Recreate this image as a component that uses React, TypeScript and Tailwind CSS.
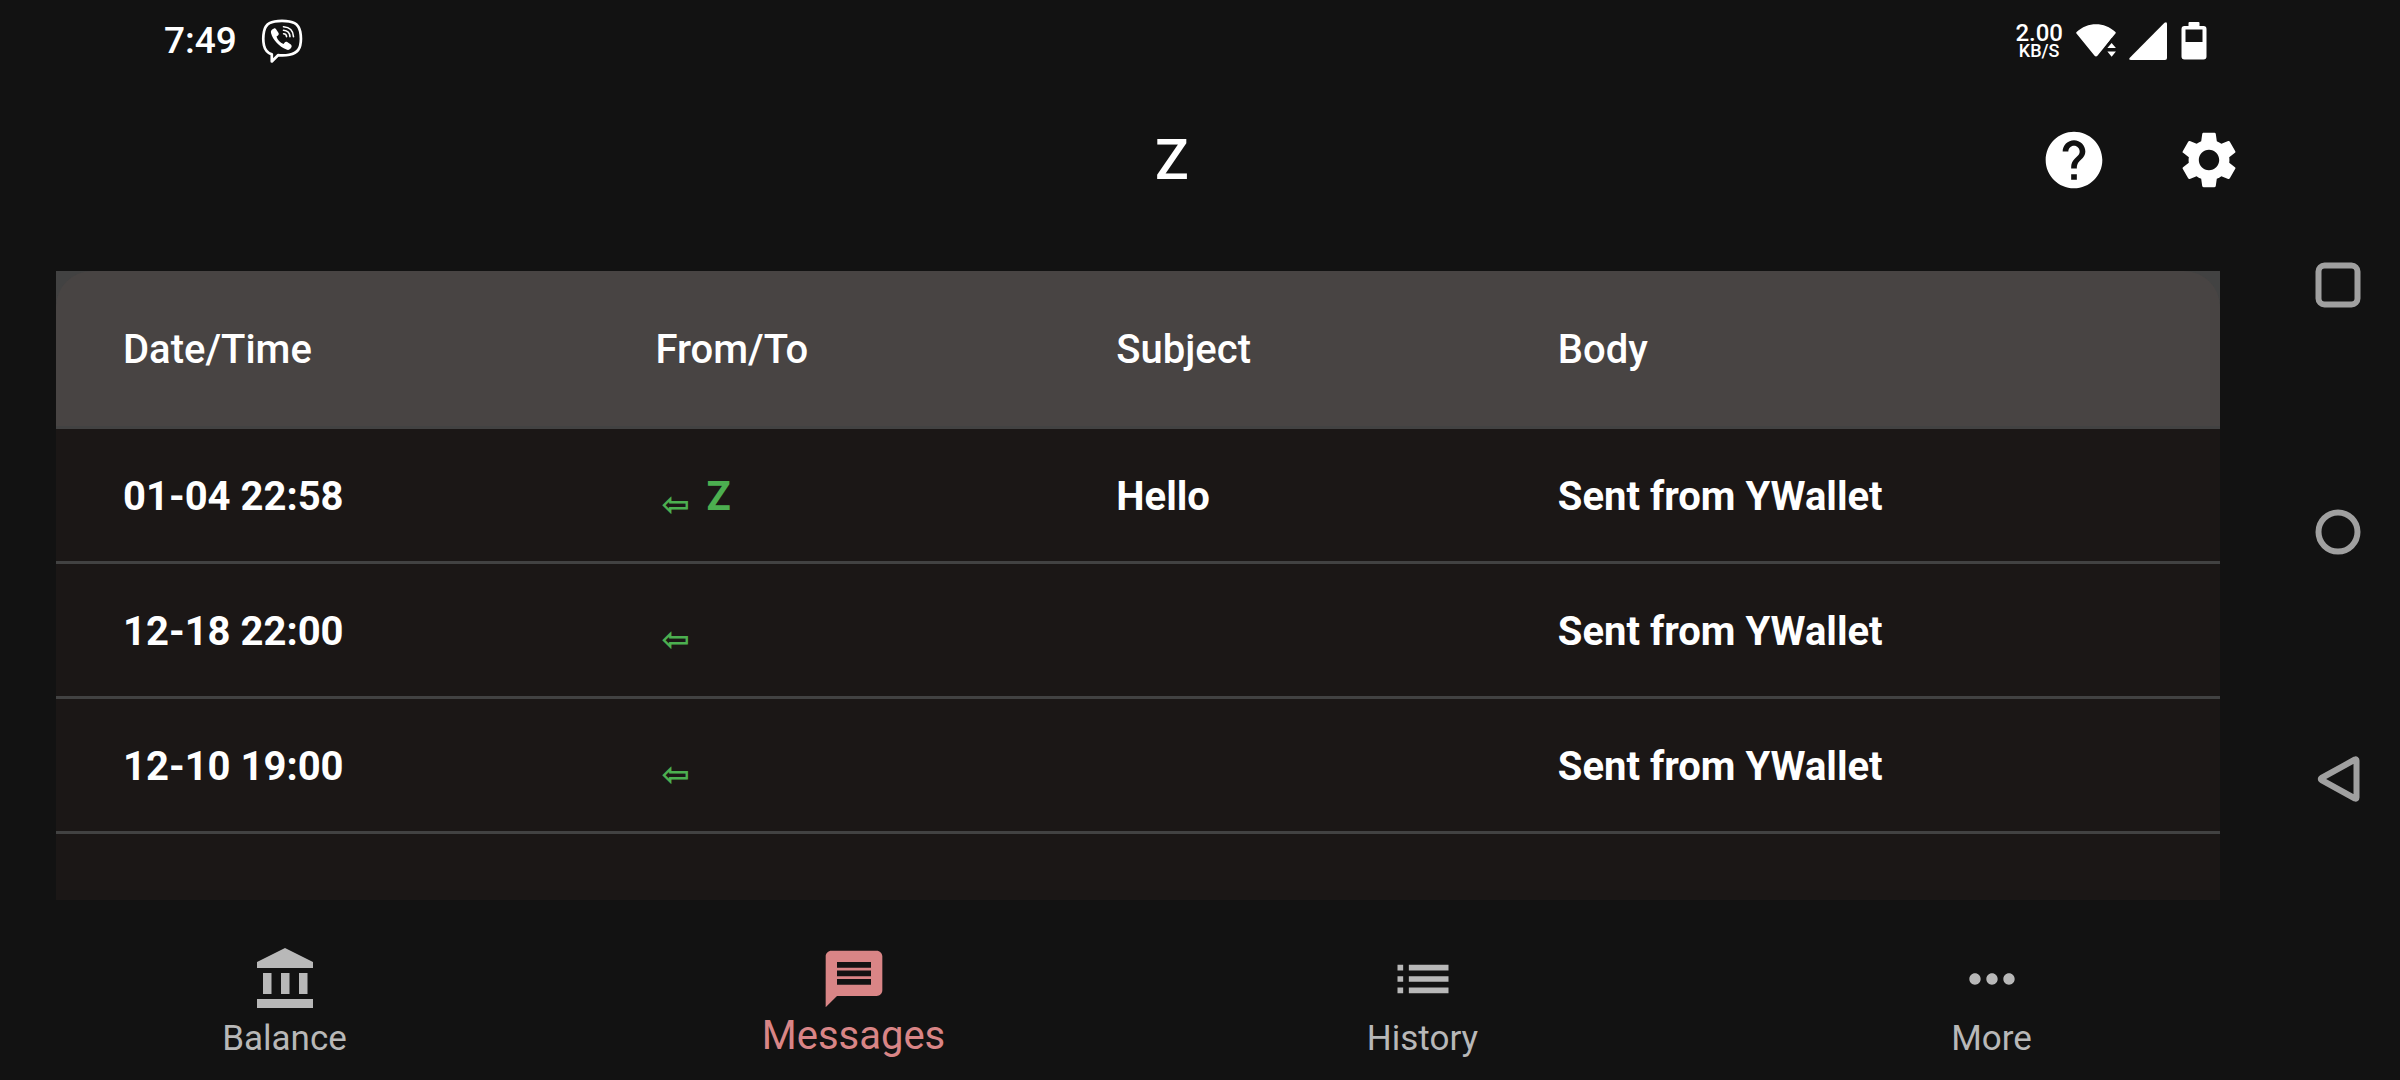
import type { ReactNode } from "react";
import { MdHelp, MdList, MdMessage, MdMoreHoriz, MdSettings } from "react-icons/md";

type Message = { date: string; contact: string; subject: string; body: string };

const messages: Message[] = [
  { date: "01-04 22:58", contact: "Z", subject: "Hello", body: "Sent from YWallet" },
  { date: "12-18 22:00", contact: "", subject: "", body: "Sent from YWallet" },
  { date: "12-10 19:00", contact: "", subject: "", body: "Sent from YWallet" },
];

function ViberIcon() {
  return (
    <svg viewBox="0 0 42 44" className="h-11 w-[42px]" fill="none" stroke="#fff" strokeLinecap="round" aria-label="Viber">
      <path
        d="M21 1.8C10 1.8 4.6 4.6 3 12.500c-1 5-1 9.500 0 14C4 31 6.500 34 10.800 35.400V42.500l6.200-6.300c12 .9 20.300-.9 22.200-9.700 1-4.500 1-9 0-14C37.400 4.600 32 1.800 21 1.800z"
        strokeWidth="2.700"
        strokeLinejoin="round"
      />
      <path
        d="M13 9.500c-2.200.8-3.600 2.400-3 4.600 2 7.200 8 13.500 15.500 16.500 2.200.9 4-.4 5-2.600.5-1.100-.1-2-1-2.700l-3.300-2.200c-1-.6-2-.4-2.700.6l-1 1.300c-3.500-1.200-6-3.800-7-7.400l1.500-1.200c.9-.7 1-1.600.4-2.600l-2.300-3.600c-.6-.8-1.300-1-2.100-.7z"
        fill="#fff"
        stroke="none"
      />
      <path d="M22.500 7.800c6 .4 9.700 4 10 10M22.500 11.300c3.900.3 6.200 2.500 6.500 6.300M22.600 14.700c1.900.1 2.900 1.100 3 2.900" strokeWidth="1.600" />
    </svg>
  );
}

function BankIcon() {
  return (
    <svg viewBox="0 0 68 68" className="size-[68px]" fill="currentColor" aria-hidden="true">
      <path d="M34 3 62 17v6H6v-6zM12 28h8.500v21H12zM30 28h8.500v21H30zM48 28h8.500v21H48zM6 54h56v9H6z" />
    </svg>
  );
}

function StatusBar() {
  return (
    <div className="flex h-[81px] shrink-0 items-center justify-between pr-[69px] pl-[164px]">
      <div className="flex items-center gap-6">
        <span className="text-[37px] leading-10 font-medium">7:49</span>
        <ViberIcon />
      </div>
      <div className="flex items-center gap-3">
        <div className="text-center font-medium">
          <div className="text-2xl leading-5">2.00</div>
          <div className="text-lg leading-4">KB/S</div>
        </div>
        <svg viewBox="0 0 44 38" className="h-9 w-[42px]" fill="#fff" aria-label="Wi-Fi">
          <path d="M1.500 9.500C13-1.500 31-1.500 42.500 9.500q.8.800 0 1.700L23.500 34.500q-1.500 1.500-3 0L1.400 11.200q-.7-.9.100-1.700z" />
          <path d="M31.500 38V25.500L38.500 16H44v22z" fill="#121212" />
          <path d="M34 26.500 38.500 21l4.500 5.500zM34 30h9l-4.500 5.500z" />
        </svg>
        <svg viewBox="0 0 38 38" className="size-[38px]" fill="#fff" aria-label="Mobile signal">
          <path d="M35.500.8Q38-.8 38 2v34q0 2-2 2H2Q-.8 38 .8 35.700z" />
        </svg>
        <svg viewBox="0 0 26 38" className="ml-[2px] h-[38px] w-[26px]" fill="#fff" fillRule="evenodd" aria-label="Battery">
          <path d="M8.500 0h9q1 0 1 1v3H22.500Q25.500 4 25.500 7v27.500q0 3-3 3H3.500q-3 0-3-3V7q0-3 3-3H7.500V1q0-1 1-1zM4.500 7.500v12.500h17V7.500z" />
        </svg>
      </div>
    </div>
  );
}

function AppBar() {
  return (
    <header className="flex h-[157px] shrink-0 items-center">
      <div className="w-[338px]" />
      <h1 className="flex-1 text-center text-[56px] leading-16 font-medium">Z</h1>
      <button type="button" aria-label="Help" className="flex w-[135px] justify-center">
        <MdHelp className="size-[68px]" />
      </button>
      <button type="button" aria-label="Settings" className="flex w-[135px] justify-center">
        <MdSettings className="size-[68px]" />
      </button>
    </header>
  );
}

function MessageTable() {
  return (
    <main className="mx-14 mt-[33px] flex-1 overflow-hidden bg-[#1b1716]">
      <table className="w-full table-fixed border-separate border-spacing-0 text-left text-[40px] leading-12">
        <colgroup>
          <col className="w-[27.7%]" />
          <col className="w-[21.3%]" />
          <col className="w-[20.4%]" />
          <col />
        </colgroup>
        <thead>
          <tr className="*:bg-[#424242] *:p-0 *:font-medium">
            <th>
              <div className="flex h-[158px] items-center rounded-tl-[36px] bg-[#484443] pl-[67px] shadow-[inset_0_-3px_0_#424242]">Date/Time</div>
            </th>
            <th>
              <div className="flex h-[158px] items-center bg-[#484443] shadow-[inset_0_-3px_0_#424242]">From/To</div>
            </th>
            <th>
              <div className="flex h-[158px] items-center bg-[#484443] shadow-[inset_0_-3px_0_#424242]">Subject</div>
            </th>
            <th>
              <div className="flex h-[158px] items-center rounded-tr-[36px] bg-[#484443] shadow-[inset_0_-3px_0_#424242]">Body</div>
            </th>
          </tr>
        </thead>
        <tbody className="font-bold">
          {messages.map((m) => (
            <tr key={m.date} className="h-[135px] *:shadow-[inset_0_-3px_0_#424242]">
              <td className="pl-[67px]">{m.date}</td>
              <td className="text-[#4caf50]">
                <div className="flex h-12 items-end">
                  <span className="w-[51px] pl-1.5 font-['DejaVu_Sans',sans-serif] text-[34px] leading-[34px]">⇦</span>
                  <span>{m.contact}</span>
                </div>
              </td>
              <td>{m.subject}</td>
              <td>{m.body}</td>
            </tr>
          ))}
        </tbody>
      </table>
    </main>
  );
}

function NavItem({ icon, label, active = false }: { icon: ReactNode; label: string; active?: boolean }) {
  return (
    <button
      type="button"
      aria-current={active ? "page" : undefined}
      className={
        active
          ? "flex flex-1 flex-col items-center text-[40px] leading-[46px] text-[#d98586]"
          : "flex flex-1 flex-col items-center text-[35px] leading-[52px] text-[#b8b8b8]"
      }
    >
      {icon}
      <span>{label}</span>
    </button>
  );
}

export default function App() {
  return (
    <div className="flex h-screen bg-[#121212] font-['Roboto',sans-serif] text-white">
      <div className="flex flex-1 flex-col">
        <StatusBar />
        <AppBar />
        <MessageTable />
        <nav className="flex h-[180px] shrink-0 items-start pt-[45px]">
          <NavItem icon={<BankIcon />} label="Balance" />
          <NavItem icon={<MdMessage className="size-[68px]" />} label="Messages" active />
          <NavItem icon={<MdList className="size-[68px]" />} label="History" />
          <NavItem icon={<MdMoreHoriz className="size-[68px]" />} label="More" />
        </nav>
      </div>
      <aside className="flex w-[124px] shrink-0 flex-col items-center justify-center gap-[199px] pb-4">
        <button type="button" aria-label="Recent apps">
          <svg viewBox="0 0 48 48" className="size-12" fill="none" stroke="#a0a0a0" strokeWidth="6">
            <rect x="4.500" y="4.500" width="39" height="39" rx="6" />
          </svg>
        </button>
        <button type="button" aria-label="Home">
          <svg viewBox="0 0 48 48" className="size-12" fill="none" stroke="#a0a0a0" strokeWidth="6">
            <circle cx="24" cy="24" r="19.500" />
          </svg>
        </button>
        <button type="button" aria-label="Back">
          <svg viewBox="0 0 48 48" className="size-12" fill="none" stroke="#a0a0a0" strokeWidth="6" strokeLinejoin="round">
            <path d="M42.500 5.500v37q0 1.500-1.500 1L7.500 25q-1.500-1 0-2L41 4.500q1.500-.5 1.500 1z" />
          </svg>
        </button>
      </aside>
    </div>
  );
}
